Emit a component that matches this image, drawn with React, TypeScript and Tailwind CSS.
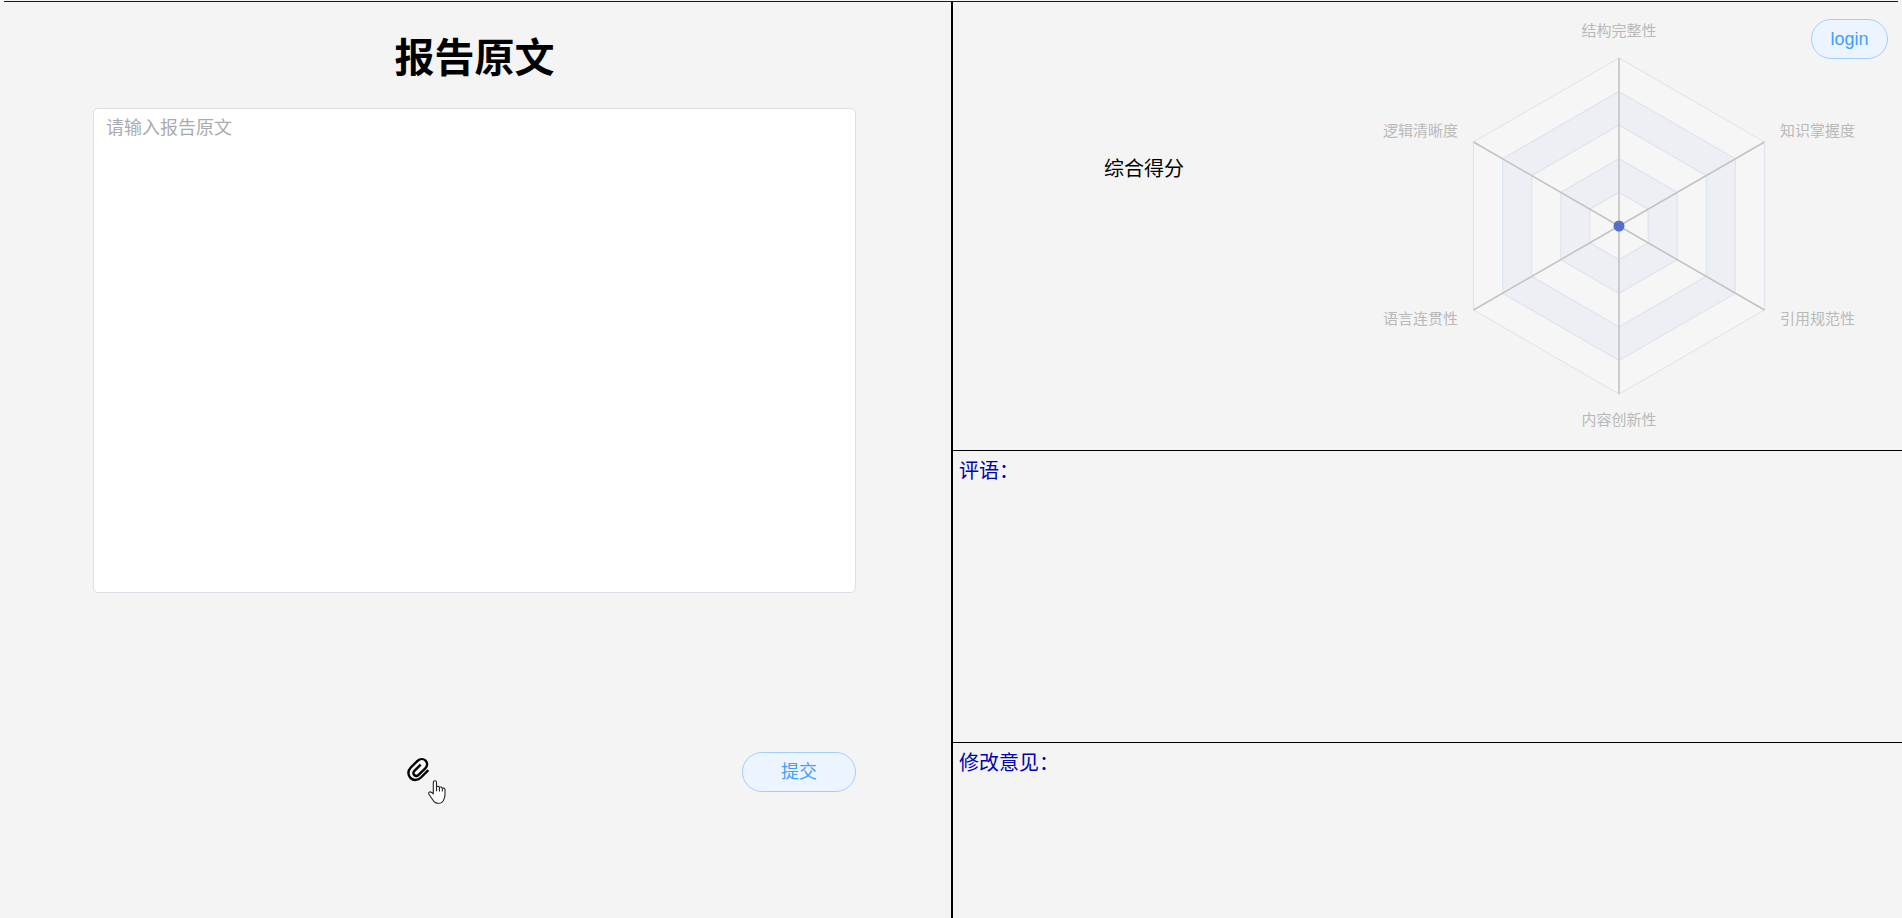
import React from "react";

const RADIUS = 168;
const LEVELS = [1, 0.8, 0.6, 0.4, 0.2];

type RadarLabel = { text: string; x: number; y: number; anchor: "start" | "middle" | "end" };

const LABELS: RadarLabel[] = [
  { text: "结构完整性", x: 0, y: -196, anchor: "middle" },
  { text: "逻辑清晰度", x: -161, y: -96, anchor: "end" },
  { text: "语言连贯性", x: -161, y: 92, anchor: "end" },
  { text: "内容创新性", x: 0, y: 193, anchor: "middle" },
  { text: "引用规范性", x: 161, y: 92, anchor: "start" },
  { text: "知识掌握度", x: 161, y: -96, anchor: "start" },
];

function corners(scale: number): [number, number][] {
  return LABELS.map((_, i) => {
    const angle = -Math.PI / 2 - (i * Math.PI) / 3;
    return [RADIUS * scale * Math.cos(angle), RADIUS * scale * Math.sin(angle)];
  });
}

function ringPath(outer: number, inner: number): string {
  const trace = (scale: number) => "M" + corners(scale).map((p) => p.join(",")).join("L") + "Z";
  return trace(outer) + (inner > 0 ? trace(inner) : "");
}

function RadarChart() {
  return (
    <svg
      viewBox="-240 -224 480 448"
      className="h-[448px] w-[480px] shrink-0"
      role="img"
      aria-label="综合得分"
    >
      {LEVELS.map((level, i) => (
        <path
          key={level}
          d={ringPath(level, LEVELS[i + 1] ?? 0)}
          fillRule="evenodd"
          fill={i % 2 === 0 ? "#f6f6f6" : "#edeff4"}
          stroke="#e0e6f1"
          strokeWidth={1.25}
        />
      ))}
      {corners(1).map(([x, y], i) => (
        <line key={i} x1={0} y1={0} x2={x} y2={y} stroke="#c3c3c3" strokeWidth={1.6} />
      ))}
      <circle r={5.5} fill="#5470c6" />
      {LABELS.map((label) => (
        <text
          key={label.text}
          x={label.x}
          y={label.y}
          dy="0.37em"
          textAnchor={label.anchor}
          className="fill-[#b9b9b9] text-[15px]"
        >
          {label.text}
        </text>
      ))}
    </svg>
  );
}

function PaperclipIcon() {
  return (
    <svg
      viewBox="0 0 24 25"
      className="h-[25px] w-6"
      fill="none"
      stroke="currentColor"
      strokeWidth={2.4}
      aria-hidden="true"
    >
      <path d="M22.300 13.200L15 20.500C12 23.500 7.500 23.800 4.500 21C1.500 18 1.800 13.500 4.800 10.500L11.500 3.900C14 1.500 17.500 1.600 19.600 3.700C21.700 5.800 21.600 9 19.300 11.300L12.600 17.800C11.200 19.200 9.400 19.100 8.200 18C7 16.800 7.100 15.100 8.400 13.800L14.700 7.600" />
    </svg>
  );
}

function HandPointer() {
  return (
    <svg viewBox="0 0 18 24" className="absolute left-[22px] top-[23px] h-6 w-[18px]" aria-hidden="true">
      <path
        d="M5.300 13.800V2.400c0-2.300 3.200-2.300 3.200 0v4.400c.8-.9 2.600-.6 2.900.6c1-.8 2.600-.4 2.900.8c1.200-.6 2.700.1 2.700 1.600v5.300c0 2-.5 3.200-1.200 4.500c-.8 2.200-2.600 3.700-5.300 3.700c-3 0-4.400-1.200-5.800-3.600L.9 14.200c-.9-1.700 1-3.100 2.400-1.900z"
        fill="#fff"
        stroke="#222"
        strokeWidth={1.100}
        strokeLinejoin="round"
      />
      <path d="M8.500 6.600v4.600M11.400 7.400v4M14.300 8.200v3.400" stroke="#222" strokeWidth={1.100} fill="none" />
    </svg>
  );
}

export default function App() {
  return (
    <div className="flex min-h-screen flex-col bg-[#f4f4f4] pt-px font-['Liberation_Sans','Noto_Sans_CJK_SC',sans-serif] text-xl text-black">
      <div className="mx-1 h-px bg-[#1a1a1a]" />
      <main className="grid grow grid-cols-2">
        <section className="flex flex-col pt-[26px] pr-[95px] pl-[93px]">
          <h1 className="text-center text-[40px] leading-[60px] font-bold">报告原文</h1>
          <textarea
            aria-label="报告原文"
            placeholder="请输入报告原文"
            className="mt-5 h-[485px] w-full resize-none rounded-[5px] border border-[#dcdfe6] bg-white px-3 py-[5px] text-lg leading-7 outline-none placeholder:text-[#a8abb2]"
          />
          <div className="mt-[159px] flex items-center justify-between">
            <button type="button" aria-label="上传附件" className="relative ml-[41%] cursor-pointer pb-1.5">
              <PaperclipIcon />
              <HandPointer />
            </button>
            <button
              type="button"
              className="h-10 w-[114px] cursor-pointer rounded-full border border-[#a0cfff] bg-[#ecf5ff] text-lg text-[#409eff]"
            >
              提交
            </button>
          </div>
        </section>

        <div className="relative grid grid-rows-[449fr_292fr_175fr] border-l-2 border-black">
          <section className="grid grid-cols-[382fr_567fr] border-b border-black">
            <h2 className="pt-[151px] text-center leading-8">综合得分</h2>
            <div className="flex items-center justify-center">
              <RadarChart />
            </div>
          </section>
          <section className="border-b border-black px-1.5 py-1">
            <h2 className="leading-8 text-[#0000b0]">评语：</h2>
          </section>
          <section className="px-1.5 py-1">
            <h2 className="leading-8 text-[#0000b0]">修改意见：</h2>
          </section>
          <button
            type="button"
            className="absolute top-[17px] right-3.5 h-10 w-[77px] cursor-pointer rounded-full border border-[#a0cfff] bg-[#ecf5ff] text-lg text-[#409eff]"
          >
            login
          </button>
        </div>
      </main>
    </div>
  );
}
